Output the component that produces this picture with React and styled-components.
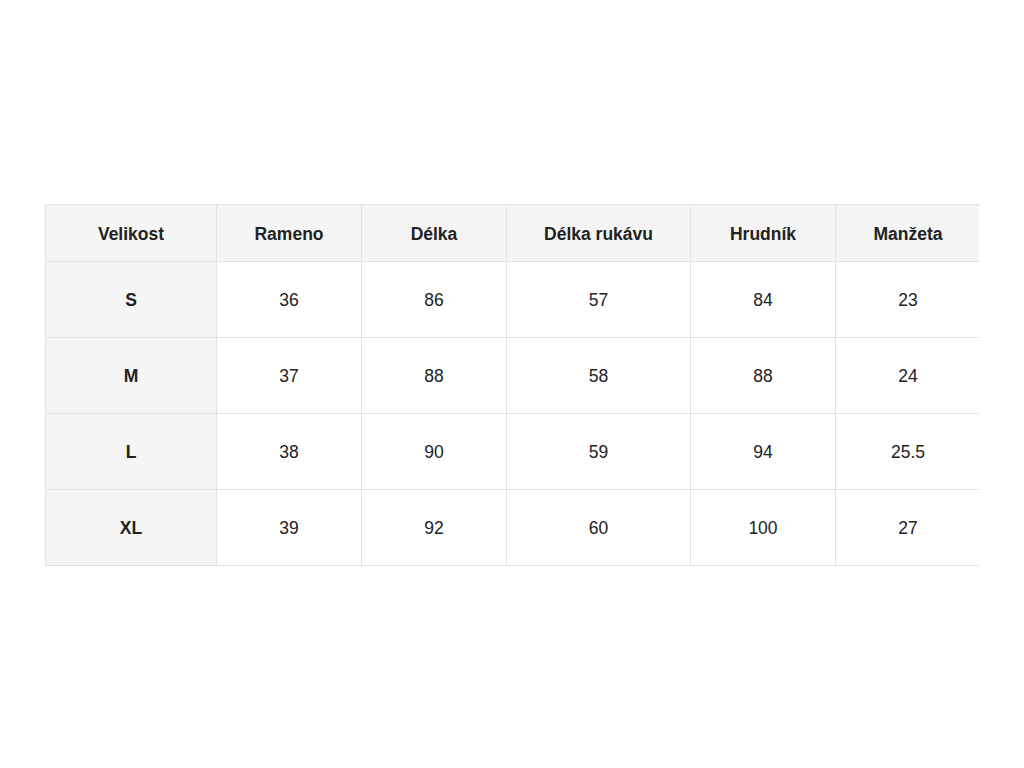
import React from "react";
import styled, { createGlobalStyle } from "styled-components";

const GlobalStyle = createGlobalStyle`
  html, body {
    margin: 0;
    padding: 0;
    background: #fff;
    font-family: "Liberation Sans", Arial, sans-serif;
    color: #222;
  }
`;

const Page = styled.div`
  height: 768px;
  display: flex;
  align-items: center;
  justify-content: center;
`;

const Clip = styled.div`
  width: 934px;
  margin-top: 2px;
  overflow: hidden;
`;

const Table = styled.table`
  width: 935px;
  border-collapse: collapse;
  table-layout: fixed;
  font-size: 17.5px;
`;

const Cell = styled.td`
  border: 1px solid #e3e3e3;
  text-align: center;
  vertical-align: middle;
  padding: 2px 0 0;
  background: ${(p) => (p.$shaded ? "#f5f5f5" : "#fff")};
  font-weight: ${(p) => (p.$bold ? 700 : 400)};
  color: #222;
`;

const HeadRow = styled.tr`
  height: 57px;
`;

const BodyRow = styled.tr`
  height: 76px;
`;

const widths = [171, 145, 145, 184, 145, 145];
const headers = ["Velikost", "Rameno", "Délka", "Délka rukávu", "Hrudník", "Manžeta"];
const rows = [
  ["S", "36", "86", "57", "84", "23"],
  ["M", "37", "88", "58", "88", "24"],
  ["L", "38", "90", "59", "94", "25.5"],
  ["XL", "39", "92", "60", "100", "27"],
];

export default function App() {
  return (
    <>
      <GlobalStyle />
      <Page>
        <Clip>
          <Table>
            <colgroup>
              {widths.map((w, i) => (
                <col key={i} style={{ width: w }} />
              ))}
            </colgroup>
            <thead>
              <HeadRow>
                {headers.map((h) => (
                  <Cell as="th" key={h} $shaded $bold>
                    {h}
                  </Cell>
                ))}
              </HeadRow>
            </thead>
            <tbody>
              {rows.map((r) => (
                <BodyRow key={r[0]}>
                  {r.map((v, i) => (
                    <Cell key={i} $shaded={i === 0} $bold={i === 0}>
                      {v}
                    </Cell>
                  ))}
                </BodyRow>
              ))}
            </tbody>
          </Table>
        </Clip>
      </Page>
    </>
  );
}
